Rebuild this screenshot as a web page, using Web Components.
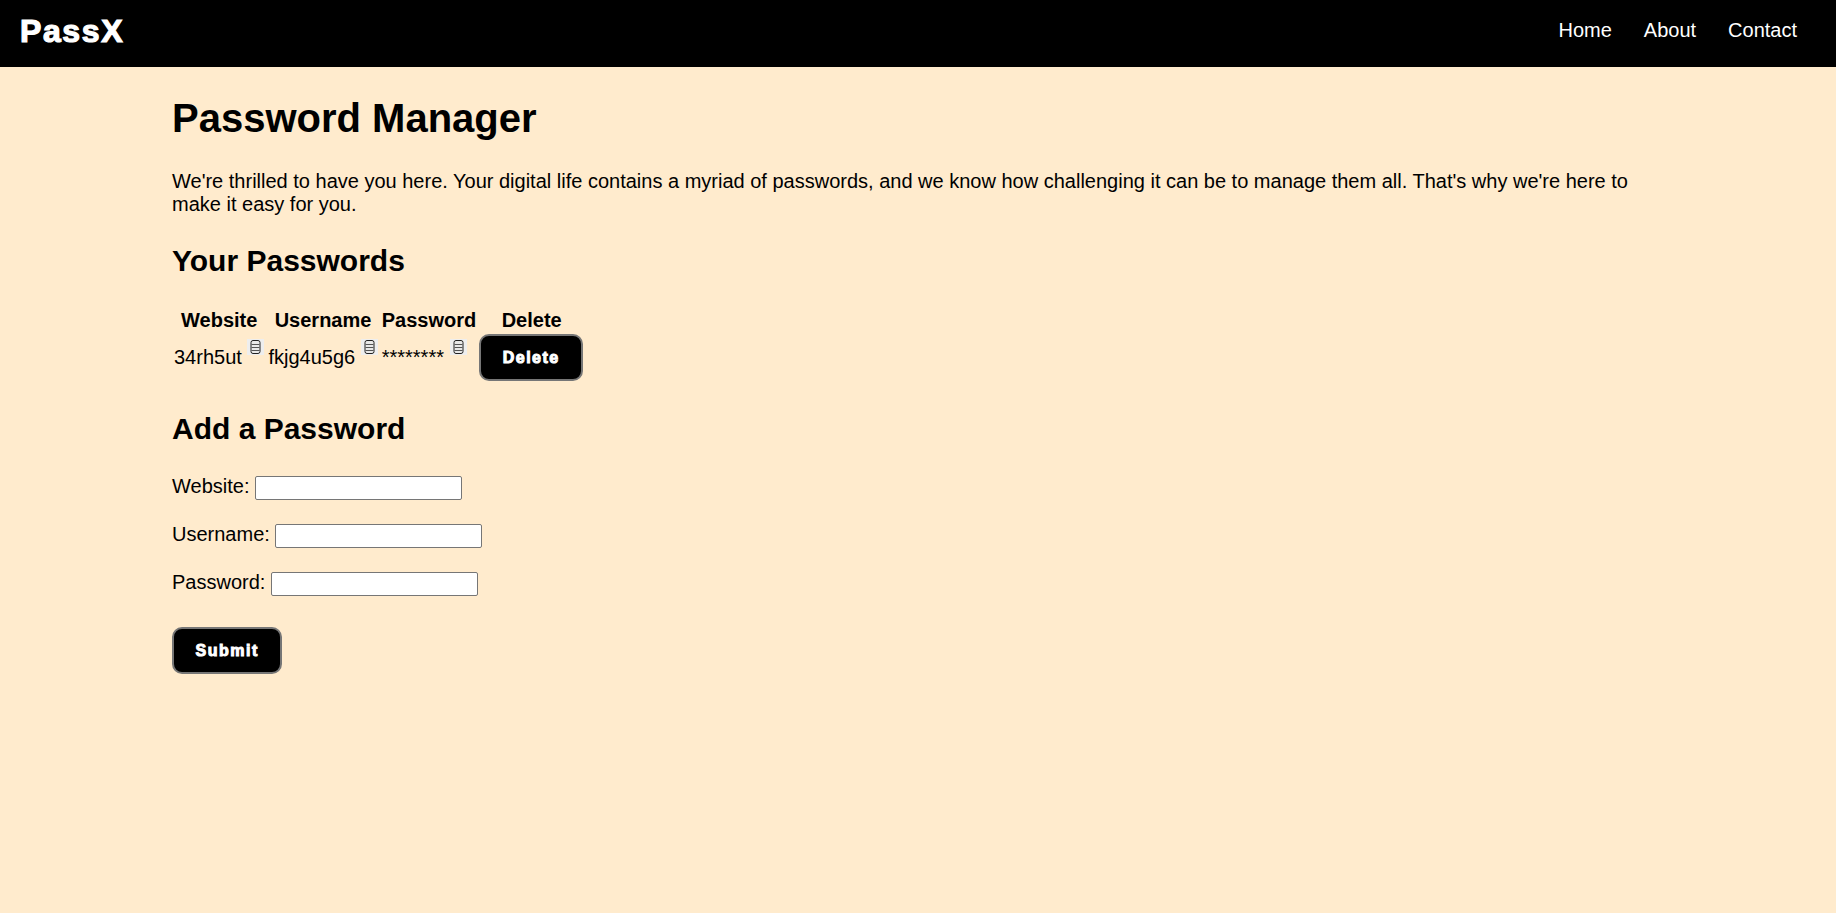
<!DOCTYPE html>
<html>
<head>
<meta charset="utf-8">
<title>PassX</title>
<style>
  html, body { margin: 0; padding: 0; }
  body {
    background: #ffebcd;
    color: #000;
    font-family: "Liberation Sans", Arial, sans-serif;
    min-height: 100vh;
  }
  main-content { display: block; }
</style>
</head>
<body>
<nav-bar logo="PassX">
  <a href="#">Home</a>
  <a href="#">About</a>
  <a href="#">Contact</a>
</nav-bar>
<main-content>
  <h1 slot="title">Password Manager</h1>
  <password-table></password-table>
  <add-form></add-form>
</main-content>

<script>
class NavBar extends HTMLElement {
  constructor() {
    super();
    this.attachShadow({ mode: "open" });
  }

  connectedCallback() {
    const logo = this.getAttribute("logo") || "";
    this.shadowRoot.innerHTML = `
      <style>
        :host{
          display: flex;
          align-items: center;
          justify-content: space-between;
          height: 67px;
          padding: 0 39px 0 20px;
          background: #000;
          color: #fff;
        }
        .logo{
          font-size: 32px;
          font-weight: 700;
          letter-spacing: 1.6px;
          -webkit-text-stroke: 1.2px #fff;
          margin-top: -5px;
        }
        .links{
          display: flex;
          gap: 32px;
          font-size: 20px;
          margin-top: -6px;
        }
        ::slotted(a){
          color: #fff;
          text-decoration: none;
        }
      </style>
      <div class="logo">${logo}</div>
      <div class="links"><slot></slot></div>
    `;
  }
}

class AppButton extends HTMLElement {
  constructor() {
    super();
    this.attachShadow({ mode: "open" });
  }

  connectedCallback() {
    this.shadowRoot.innerHTML = `
      <style>
        :host{ display: inline-block; vertical-align: middle; }
        button{
          display: block;
          box-sizing: border-box;
          height: 47px;
          padding: 0 21.5px;
          background: #000;
          color: #fff;
          border: 2px solid #767676;
          border-radius: 10px;
          font-family: "Liberation Sans", Arial, sans-serif;
          font-size: 16px;
          font-weight: 700;
          letter-spacing: 1.5px;
          -webkit-text-stroke: 1px #fff;
        }
      </style>
      <button><slot></slot></button>
    `;
  }
}

class CopyIcon extends HTMLElement {
  constructor() {
    super();
    this.attachShadow({ mode: "open" });
  }

  connectedCallback() {
    this.shadowRoot.innerHTML = `
      <style>
        :host{
          display: inline-block;
          width: 17px;
          height: 16px;
          background: #eeeeee;
        }
        svg{ display: block; }
      </style>
      <svg width="17" height="16" viewBox="0 0 17 16" fill="none">
        <rect x="4" y="1.5" width="9" height="13" rx="2" fill="#e8e8e8" stroke="#222"/>
        <path d="M4.5 5.5H12.5M4.5 8.5H12.5M4.5 11.5H12.5" stroke="#555"/>
      </svg>
    `;
  }
}

class PasswordTable extends HTMLElement {
  constructor() {
    super();
    this.attachShadow({ mode: "open" });
  }

  connectedCallback() {
    this.shadowRoot.innerHTML = `
      <style>
        :host{ display: block; }
        h2{
          margin: 0 0 29px;
          font-size: 30px;
          line-height: 34px;
        }
        table{
          margin-left: -1px;
          border-spacing: 2px 1px;
          font-size: 20px;
        }
        th, td{ padding: 1px; }
        th{ padding-bottom: 0; }
        .val{ white-space: nowrap; }
        /* raised above the text, negative margin keeps the row height */
        copy-icon{ vertical-align: 9px; margin-top: -12px; }
        .action{ text-align: center; padding-left: 0; }
      </style>
      <h2>Your Passwords</h2>
      <table>
        <thead>
          <tr><th>Website</th><th>Username</th><th>Password</th><th>Delete</th></tr>
        </thead>
        <tbody>
          <tr>
            <td class="val">34rh5ut <copy-icon></copy-icon></td>
            <td class="val">fkjg4u5g6 <copy-icon></copy-icon></td>
            <td class="val">******** <copy-icon></copy-icon></td>
            <td class="action"><app-button>Delete</app-button></td>
          </tr>
        </tbody>
      </table>
    `;
  }
}

class AddForm extends HTMLElement {
  constructor() {
    super();
    this.attachShadow({ mode: "open" });
  }

  connectedCallback() {
    const field = (label) => `
      <div class="field">
        <label>${label}:</label> <input type="text">
      </div>`;
    this.shadowRoot.innerHTML = `
      <style>
        :host{ display: block; margin-top: 29px; }
        h2{
          margin: 0 0 29px;
          font-size: 30px;
          line-height: 34px;
        }
        .field{
          height: 24px;
          margin-bottom: 24px;
          font-size: 20px;
          line-height: 23px;
        }
        input{
          box-sizing: border-box;
          width: 207px;
          height: 24px;
          padding: 1px 2px;
          border: 1px solid #767676;
          border-radius: 2px;
          background: #fff;
          vertical-align: top;
          margin: 1px 0 0;
        }
        app-button{ margin-top: 8px; }
      </style>
      <h2>Add a Password</h2>
      ${field("Website")}
      ${field("Username")}
      ${field("Password")}
      <app-button>Submit</app-button>
    `;
  }
}

class MainContent extends HTMLElement {
  constructor() {
    super();
    this.attachShadow({ mode: "open" });
  }

  connectedCallback() {
    this.shadowRoot.innerHTML = `
      <style>
        :host{
          display: block;
          padding: 28px 172px 0;
        }
        ::slotted(h1){
          margin: 0;
          font-size: 40px;
          line-height: 46px;
        }
        p{
          margin: 29px 0 28px;
          font-size: 20px;
          line-height: 23px;
        }
      </style>
      <slot name="title"></slot>
      <p>We're thrilled to have you here. Your digital life contains a myriad of passwords, and we know how challenging it can be to manage them all. That's why we're here to make it easy for you.</p>
      <slot></slot>
    `;
  }
}

customElements.define("nav-bar", NavBar);
customElements.define("app-button", AppButton);
customElements.define("copy-icon", CopyIcon);
customElements.define("password-table", PasswordTable);
customElements.define("add-form", AddForm);
customElements.define("main-content", MainContent);
</script>
</body>
</html>
